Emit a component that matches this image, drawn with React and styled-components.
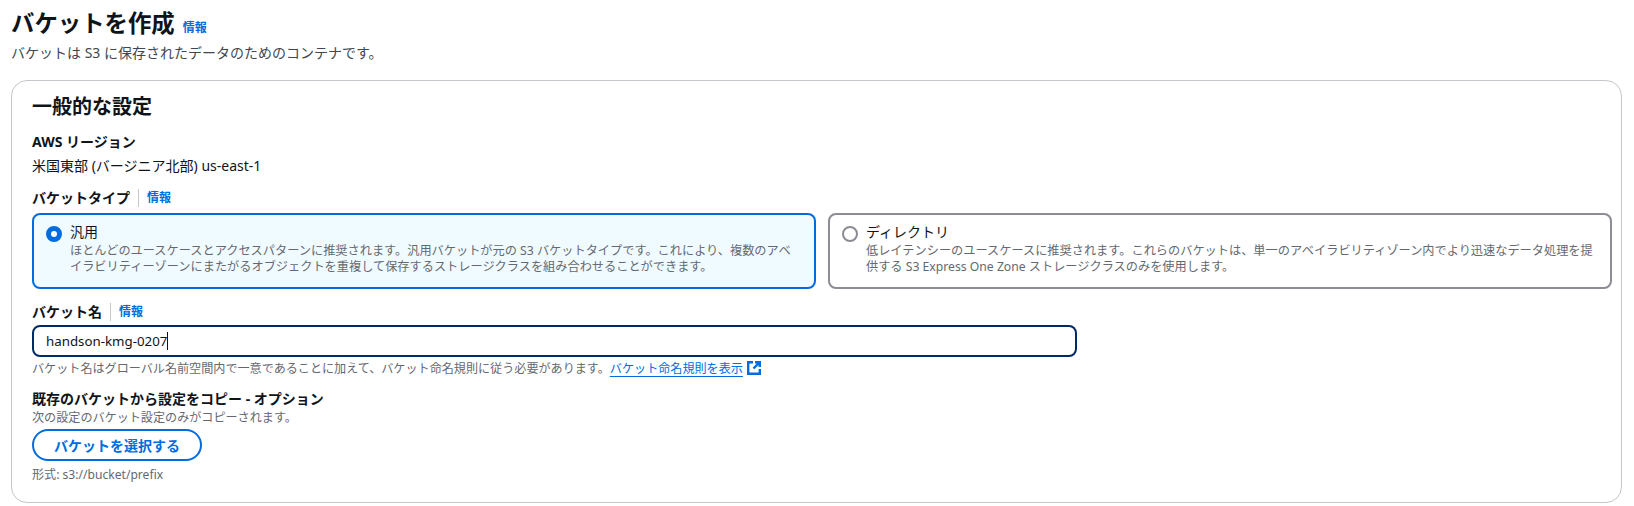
import React from 'react';
import styled, { createGlobalStyle } from 'styled-components';

const GlobalStyle = createGlobalStyle`
  html, body {
    margin: 0;
    padding: 0;
    background: #fff;
    color: #0f141a;
    font-family: "Noto Sans", "Noto Sans CJK JP", sans-serif;
    font-size: 14px;
  }
`;

const Page = styled.div`
  width: 1634px;
  height: 506px;
  box-sizing: border-box;
  padding: 8px 12px 0 11px;
  overflow: hidden;
`;

const TitleRow = styled.div`
  display: flex;
  align-items: baseline;
  gap: 8px;
`;

const Title = styled.h1`
  margin: 0;
  font-size: 23.4px;
  line-height: 30px;
  font-weight: 700;
`;

const InfoLink = styled.a`
  color: #006ce0;
  font-size: 12px;
  font-weight: 700;
  line-height: 16px;
  text-decoration: none;
`;

const Subtitle = styled.p`
  margin: 5px 0 0;
  font-size: 14px;
  line-height: 20px;
  color: #424650;
`;

const Card = styled.section`
  margin-top: 17px;
  box-sizing: border-box;
  height: 423px;
  border: 1px solid #c6c6cd;
  border-radius: 16px;
  padding: 12px 9px 0 20px;
`;

const SectionTitle = styled.h2`
  margin: 0;
  font-size: 20px;
  line-height: 28px;
  font-weight: 700;
`;

const Field = styled.div`
  margin-top: ${(p) => p.$top || 0}px;
`;

const LabelRow = styled.div`
  display: flex;
  align-items: center;
  height: 20px;
`;

const Label = styled.div`
  font-size: 14px;
  line-height: 20px;
  font-weight: 700;
`;

const LabelInfo = styled(InfoLink)`
  margin-left: 8px;
  padding-left: 8px;
  border-left: 1px solid #c6c6cd;
  line-height: 18px;
`;

const Value = styled.div`
  margin-top: 4px;
  font-size: 14px;
  line-height: 20px;
`;

const Tiles = styled.div`
  display: grid;
  grid-template-columns: 1fr 1fr;
  gap: 12px;
  margin-top: 5px;
`;

const Tile = styled.div`
  box-sizing: border-box;
  height: 76px;
  display: flex;
  gap: 8px;
  padding: 7px 12px;
  border: 2px solid ${(p) => (p.$selected ? '#006ce0' : '#8c8c94')};
  border-radius: 8px;
  background: ${(p) => (p.$selected ? '#f0fbff' : '#fff')};
`;

const Radio = styled.span`
  flex: none;
  box-sizing: border-box;
  width: 16px;
  height: 16px;
  margin-top: 4px;
  border-radius: 50%;
  background: #fff;
  border: ${(p) => (p.$selected ? '5px solid #006ce0' : '2px solid #8c8c94')};
`;

const TileBody = styled.div`
  min-width: 0;
`;

const TileTitle = styled.div`
  font-size: 14px;
  line-height: 20px;
`;

const TileText = styled.div`
  margin-top: 1px;
  font-size: 12.2px;
  line-height: 16px;
  color: #656871;
`;

const Input = styled.div`
  box-sizing: border-box;
  width: 1045px;
  height: 32px;
  margin-top: 3px;
  display: flex;
  align-items: center;
  padding: 0 12px;
  border: 2px solid #002a66;
  border-radius: 8px;
  font-size: 13.3px;
`;

const Caret = styled.span`
  width: 1px;
  height: 18px;
  background: #0f141a;
`;

const Hint = styled.div`
  margin-top: ${(p) => p.$top ?? 4}px;
  font-size: 12.1px;
  line-height: 16px;
  color: #656871;
`;

const HintLink = styled.a`
  color: #006ce0;
  text-decoration: underline;
  text-underline-offset: 3px;
`;

const ExternalIcon = styled.svg`
  width: 14px;
  height: 14px;
  margin-left: 4px;
  vertical-align: -2px;
`;

const Button = styled.button`
  display: block;
  box-sizing: border-box;
  width: 170px;
  height: 32px;
  margin-top: 3px;
  padding: 0;
  border: 2px solid #006ce0;
  border-radius: 20px;
  background: #fff;
  color: #006ce0;
  font-family: inherit;
  font-size: 14px;
  font-weight: 700;
`;

export default function App() {
  return (
    <Page>
      <GlobalStyle />
      <TitleRow>
        <Title>バケットを作成</Title>
        <InfoLink href="#">情報</InfoLink>
      </TitleRow>
      <Subtitle>バケットは S3 に保存されたデータのためのコンテナです。</Subtitle>
      <Card>
        <SectionTitle>一般的な設定</SectionTitle>
        <Field $top={11}>
          <Label>AWS リージョン</Label>
          <Value>米国東部 (バージニア北部) us-east-1</Value>
        </Field>
        <Field $top={12}>
          <LabelRow>
            <Label>バケットタイプ</Label>
            <LabelInfo href="#">情報</LabelInfo>
          </LabelRow>
          <Tiles>
            <Tile $selected>
              <Radio $selected />
              <TileBody>
                <TileTitle>汎用</TileTitle>
                <TileText>
                  ほとんどのユースケースとアクセスパターンに推奨されます。汎用バケットが元の S3 バケットタイプです。これにより、複数のアベ
                  <br />
                  イラビリティーゾーンにまたがるオブジェクトを重複して保存するストレージクラスを組み合わせることができます。
                </TileText>
              </TileBody>
            </Tile>
            <Tile>
              <Radio />
              <TileBody>
                <TileTitle>ディレクトリ</TileTitle>
                <TileText>
                  低レイテンシーのユースケースに推奨されます。これらのバケットは、単一のアベイラビリティゾーン内でより迅速なデータ処理を提
                  <br />
                  供する S3 Express One Zone ストレージクラスのみを使用します。
                </TileText>
              </TileBody>
            </Tile>
          </Tiles>
        </Field>
        <Field $top={13}>
          <LabelRow>
            <Label>バケット名</Label>
            <LabelInfo href="#">情報</LabelInfo>
          </LabelRow>
          <Input>
            handson-kmg-0207
            <Caret />
          </Input>
          <Hint>
            バケット名はグローバル名前空間内で一意であることに加えて、バケット命名規則に従う必要があります。
            <HintLink href="#">バケット命名規則を表示</HintLink>
            <ExternalIcon viewBox="0 0 14 14" fill="none" stroke="#006ce0" strokeWidth="2.4">
              <path d="M6 1.2H1.2v11.6h11.6V8" />
              <path d="M8 1.2h4.8V6M12.8 1.2 6.5 7.5" />
            </ExternalIcon>
          </Hint>
        </Field>
        <Field $top={12}>
          <Label>既存のバケットから設定をコピー - オプション</Label>
          <Hint $top={1}>次の設定のバケット設定のみがコピーされます。</Hint>
          <Button>バケットを選択する</Button>
          <Hint $top={6}>形式: s3://bucket/prefix</Hint>
        </Field>
      </Card>
    </Page>
  );
}
